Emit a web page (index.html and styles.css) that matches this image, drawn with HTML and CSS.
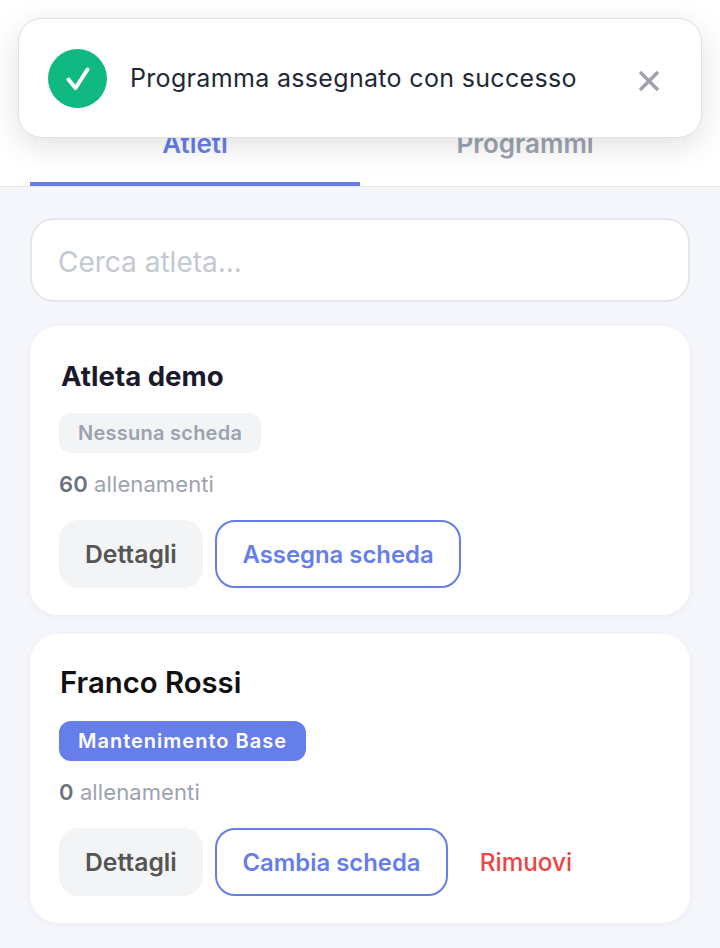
FILE: index.html
```html
<!DOCTYPE html>
<html lang="it">
<head>
<meta charset="UTF-8">
<meta name="viewport" content="width=device-width, initial-scale=1.0">
<link rel="stylesheet" href="styles.css">
<title>Atleti</title>
</head>
<body>
<div class="toast">
  <span class="toast-icon">
    <svg width="30" height="30" viewBox="0 0 30 30" fill="none"><path d="M5.5 16.5L12.5 25L24.5 6.5" stroke="#fff" stroke-width="4" stroke-linecap="round" stroke-linejoin="round"/></svg>
  </span>
  <span class="toast-text">Programma assegnato con successo</span>
  <svg class="toast-close" width="24" height="24" viewBox="0 0 24 24" fill="none"><path d="M3 3L21 21M21 3L3 21" stroke="#9ca3af" stroke-width="3.4"/></svg>
</div>

<nav class="tabs">
  <div class="tab active">Atleti</div>
  <div class="tab">Programmi</div>
</nav>

<main class="content">
  <input class="search" type="text" placeholder="Cerca atleta...">

  <section class="card">
    <h2 class="name name-demo">Atleta demo</h2>
    <div><span class="badge">Nessuna scheda</span></div>
    <p class="count"><strong>60</strong> allenamenti</p>
    <div class="actions">
      <button class="btn btn-grey">Dettagli</button>
      <button class="btn btn-outline">Assegna scheda</button>
    </div>
  </section>

  <section class="card">
    <h2 class="name">Franco Rossi</h2>
    <div><span class="badge badge-blue">Mantenimento Base</span></div>
    <p class="count"><strong>0</strong> allenamenti</p>
    <div class="actions">
      <button class="btn btn-grey">Dettagli</button>
      <button class="btn btn-outline">Cambia scheda</button>
      <button class="btn btn-text">Rimuovi</button>
    </div>
  </section>
</main>
</body>
</html>
```

FILE: styles.css
```css
* {
    box-sizing: border-box;
}

body {
    margin: 0;
    min-height: 100vh;
    background: #f5f6fb;
    font-family: Inter, "Noto Sans", sans-serif;
    overflow: hidden;
}

.toast {
    position: absolute;
    top: 18px;
    left: 18px;
    width: 684px;
    height: 120px;
    display: flex;
    align-items: center;
    padding: 2px 40px 0 29px;
    background: #fff;
    border: 1px solid #e0e1e4;
    border-radius: 24px;
    box-shadow: 0 8px 30px rgba(0, 0, 0, 0.12);
}

.toast-icon {
    width: 59px;
    height: 59px;
    margin: -2px 23px 0 0;
    flex-shrink: 0;
    display: flex;
    align-items: center;
    justify-content: center;
    border-radius: 50%;
    background: #10b981;
}

.toast-text {
    flex: 1;
    margin-top: -3px;
    font-size: 25px;
    font-weight: 400;
    letter-spacing: 0.33px;
    color: #1f2937;
}

.toast-close {
    flex-shrink: 0;
    margin-top: 3px;
}

.tabs {
    height: 187px;
    display: flex;
    align-items: flex-end;
    padding: 0 30px;
    background: #fff;
    border-bottom: 1px solid #e5e7eb;
}

.tab {
    flex: 1;
    height: 62px;
    padding-top: 4px;
    text-align: center;
    font-size: 26px;
    font-weight: 600;
    color: #9ca3af;
}

.tab.active {
    color: #667eea;
    border-bottom: 4px solid #667eea;
}

.content {
    padding: 31px 30px 0;
}

.search {
    display: block;
    width: 100%;
    height: 84px;
    margin-bottom: 24px;
    padding: 3px 26px 0;
    background: #fff;
    border: 2px solid #e5e7eb;
    border-radius: 24px;
    font-family: inherit;
    font-size: 28px;
}

.search::placeholder {
    color: #c4c8d0;
}

.card {
    height: 289px;
    margin-bottom: 19px;
    padding: 32px 29px 0;
    background: #fff;
    border-radius: 28px;
    box-shadow: 0 2px 8px rgba(0, 0, 0, 0.04);
}

.name {
    margin: 0 0 21px 1px;
    font-size: 29.3px;
    line-height: 34px;
    font-weight: 600;
    color: #111;
}

.name-demo {
    margin: 0 0 18px 2px;
    font-size: 27.6px;
    line-height: 37px;
    font-weight: 700;
    color: #1a1a2e;
}

.badge {
    display: inline-block;
    height: 40px;
    padding: 0 19px;
    border-radius: 12px;
    background: #f3f4f6;
    color: #9ca3af;
    font-size: 20px;
    line-height: 40px;
    font-weight: 600;
    letter-spacing: 0.25px;
}

.badge-blue {
    background: #667eea;
    color: #fff;
    letter-spacing: 1px;
}

.count {
    margin: 14px 0 19px;
    font-size: 22px;
    line-height: 34px;
    letter-spacing: 0.1px;
    color: #9ca3af;
}

.count strong {
    font-weight: 600;
    color: #6b7280;
}

.actions {
    display: flex;
    gap: 12px;
}

.btn {
    height: 68px;
    padding: 0 25.7px;
    border: none;
    border-radius: 20px;
    background: none;
    font-family: inherit;
    font-size: 23.9px;
    font-weight: 600;
}

.btn-grey {
    padding: 0 26px;
    font-size: 24.7px;
    background: #f3f4f6;
    color: #555;
}

.btn-outline {
    background: #fff;
    border: 2px solid #667eea;
    color: #667eea;
}

.btn-text {
    padding: 0 19.5px;
    font-size: 24.3px;
    color: #ef4444;
    font-weight: 500;
}
```
